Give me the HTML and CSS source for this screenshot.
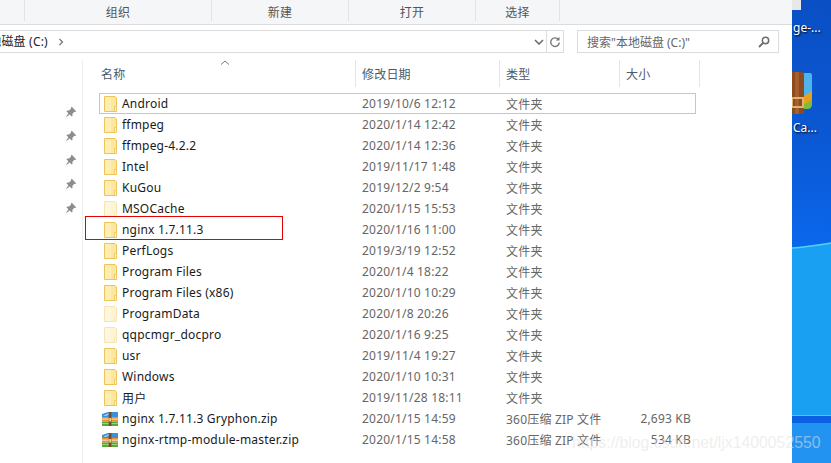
FILE: index.html
```html
<!DOCTYPE html>
<html lang="zh">
<head>
<meta charset="utf-8">
<title>本地磁盘 (C:)</title>
<link rel="stylesheet" href="styles.css">
</head>
<body>
<svg class="defs" width="0" height="0" aria-hidden="true">
  <symbol id="folder" viewBox="0 0 13 16">
    <path d="M.5.5h10.500l1.500 1.500v13.500H.5z" fill="#fde7a0" stroke="#ecc45a"/>
    <path d="M1 1h6v14H1z" fill="#ffeeb4"/>
    <path d="M10.500 10.500h2v5h-2z" fill="#fff3c4" stroke="#ecc45a" stroke-width=".8"/>
  </symbol>
  <symbol id="pin" viewBox="0 0 12 12">
    <path d="M6.800.8l4.400 4.400-1 .9-.8-.3-2 2 .2 1.800-.9.900-2-2L1.300 11 1 10.700l2.400-3.400-2-2 .9-.9 1.800.2 2-2-.3-.8z" fill="#8a8d92"/>
  </symbol>
  <symbol id="zip" viewBox="0 0 16 14">
    <path d="M0 2l6-2h10v5H0z" fill="#3f8fd8"/>
    <path d="M1 4l6-3h2L4 4z" fill="#a9d8f5"/>
    <path d="M0 5h16v4.500H0z" fill="#e8933a"/>
    <path d="M0 6.600h16v1.200H0z" fill="#f9d9a6"/>
    <path d="M0 9.500h16V14H0z" fill="#5aa83c"/>
    <path d="M0 11h16v1H0z" fill="#9ad07a"/>
    <path d="M6.800 0h2.600v14H6.800z" fill="#7a4a26"/>
    <path d="M7.200 6h1.800v3.500H7.200z" fill="#f2d27a"/>
  </symbol>
</svg>

<div class="screen">
  <main class="window">
    <nav class="toolbar">
      <span class="tool tool-a">组织</span>
      <span class="tool tool-b">新建</span>
      <span class="tool tool-c">打开</span>
      <span class="tool tool-d">选择</span>
    </nav>

    <div class="address-row">
      <div class="address">
        <span class="crumb">本地磁盘 (C:)</span>
        <svg class="crumb-arrow" viewBox="0 0 6 8" width="6" height="8"><path d="M1.500 1l3 3-3 3" fill="none" stroke="#777" stroke-width="1.300"/></svg>
        <svg class="drop" viewBox="0 0 10 6" width="10" height="6"><path d="M1 1l4 4 4-4" fill="none" stroke="#666" stroke-width="1.500"/></svg>
        <span class="refresh">
          <svg viewBox="0 0 12 12" width="12" height="12"><path d="M9.700 4A4.300 4.300 0 1 0 10.300 6.500" fill="none" stroke="#777" stroke-width="1.400"/><path d="M10.500 .8v3.700H6.800z" fill="#777"/></svg>
        </span>
      </div>
      <div class="search">
        <span>搜索"本地磁盘 (C:)"</span>
        <svg viewBox="0 0 12 12" width="12" height="12"><circle cx="7.500" cy="4.500" r="3.200" fill="none" stroke="#6d6d6d" stroke-width="1.500"/><path d="M5 7l-4 4" stroke="#6d6d6d" stroke-width="1.800"/></svg>
      </div>
    </div>

    <div class="body">
      <aside class="pins">
        <svg class="pin"><use href="#pin"/></svg>
        <svg class="pin"><use href="#pin"/></svg>
        <svg class="pin"><use href="#pin"/></svg>
        <svg class="pin"><use href="#pin"/></svg>
        <svg class="pin"><use href="#pin"/></svg>
      </aside>
      <section class="list">
        <svg class="sort" viewBox="0 0 10 5" width="10" height="5"><path d="M1 4.500l4-3.500 4 3.500" fill="none" stroke="#777"/></svg>
        <header class="head">
          <span class="h-name">名称</span>
          <span class="h-date">修改日期</span>
          <span class="h-type">类型</span>
          <span class="h-size">大小</span>
        </header>
        <div class="rows">
          <div class="row selected"><svg class="ico"><use href="#folder"/></svg><span class="name">Android</span><span class="date">2019/10/6 12:12</span><span class="type">文件夹</span><span class="size"></span></div>
          <div class="row"><svg class="ico"><use href="#folder"/></svg><span class="name">ffmpeg</span><span class="date">2020/1/14 12:42</span><span class="type">文件夹</span><span class="size"></span></div>
          <div class="row"><svg class="ico"><use href="#folder"/></svg><span class="name">ffmpeg-4.2.2</span><span class="date">2020/1/14 12:36</span><span class="type">文件夹</span><span class="size"></span></div>
          <div class="row"><svg class="ico"><use href="#folder"/></svg><span class="name">Intel</span><span class="date">2019/11/17 1:48</span><span class="type">文件夹</span><span class="size"></span></div>
          <div class="row"><svg class="ico"><use href="#folder"/></svg><span class="name">KuGou</span><span class="date">2019/12/2 9:54</span><span class="type">文件夹</span><span class="size"></span></div>
          <div class="row"><svg class="ico faded"><use href="#folder"/></svg><span class="name">MSOCache</span><span class="date">2020/1/15 15:53</span><span class="type">文件夹</span><span class="size"></span></div>
          <div class="row marked"><svg class="ico"><use href="#folder"/></svg><span class="name">nginx 1.7.11.3</span><span class="date">2020/1/16 11:00</span><span class="type">文件夹</span><span class="size"></span></div>
          <div class="row"><svg class="ico"><use href="#folder"/></svg><span class="name">PerfLogs</span><span class="date">2019/3/19 12:52</span><span class="type">文件夹</span><span class="size"></span></div>
          <div class="row"><svg class="ico"><use href="#folder"/></svg><span class="name">Program Files</span><span class="date">2020/1/4 18:22</span><span class="type">文件夹</span><span class="size"></span></div>
          <div class="row"><svg class="ico"><use href="#folder"/></svg><span class="name">Program Files (x86)</span><span class="date">2020/1/10 10:29</span><span class="type">文件夹</span><span class="size"></span></div>
          <div class="row"><svg class="ico faded"><use href="#folder"/></svg><span class="name">ProgramData</span><span class="date">2020/1/8 20:26</span><span class="type">文件夹</span><span class="size"></span></div>
          <div class="row"><svg class="ico faded"><use href="#folder"/></svg><span class="name">qqpcmgr_docpro</span><span class="date">2020/1/16 9:25</span><span class="type">文件夹</span><span class="size"></span></div>
          <div class="row"><svg class="ico"><use href="#folder"/></svg><span class="name">usr</span><span class="date">2019/11/4 19:27</span><span class="type">文件夹</span><span class="size"></span></div>
          <div class="row"><svg class="ico"><use href="#folder"/></svg><span class="name">Windows</span><span class="date">2020/1/10 10:31</span><span class="type">文件夹</span><span class="size"></span></div>
          <div class="row"><svg class="ico"><use href="#folder"/></svg><span class="name">用户</span><span class="date">2019/11/28 18:11</span><span class="type">文件夹</span><span class="size"></span></div>
          <div class="row"><svg class="ico zip"><use href="#zip"/></svg><span class="name">nginx 1.7.11.3 Gryphon.zip</span><span class="date">2020/1/15 14:59</span><span class="type">360压缩 ZIP 文件</span><span class="size">2,693 KB</span></div>
          <div class="row"><svg class="ico zip"><use href="#zip"/></svg><span class="name">nginx-rtmp-module-master.zip</span><span class="date">2020/1/15 14:58</span><span class="type">360压缩 ZIP 文件</span><span class="size">534 KB</span></div>
        </div>
      </section>
    </div>
  </main>

  <aside class="desktop">
    <svg class="wave" viewBox="0 0 39 463" width="39" height="463">
      <path d="M0 248C14 247 26 245 39 243V415H0z" fill="#19a0f2"/>
      <path d="M0 248C14 247 26 245 39 243" fill="none" stroke="#4fd4f5" stroke-width="1.500"/>
      <path d="M0 415h39v1H0z" fill="#5cbcf5"/>
      <path d="M0 416h39v7H0z" fill="#0a62e2"/>
      <path d="M0 423h39v40H0z" fill="#2393f2"/>
    </svg>
    <span class="note"></span>
    <span class="label label-top">ge-...</span>
    <svg class="bag" viewBox="0 0 20 42" width="20" height="42">
      <path d="M9 1h9a2 2 0 0 1 2 2v25l-9 9H9z" fill="#4fb4ec"/>
      <path d="M9 26l11-7v10l-11 5z" fill="#e9a11c"/>
      <path d="M9 34l11-6v4c0 4-2 5-5 5H9z" fill="#7cbb3c"/>
      <path d="M0 0h9c2 0 3 1 3 3v39H0z" fill="#8c4a20"/>
      <path d="M3 0h4v42H3z" fill="#a65f2a"/>
      <path d="M0 26h11v9H0z" fill="none" stroke="#d9b66a" stroke-width="2"/>
    </svg>
    <span class="label label-bag">Ca...</span>
  </aside>
</div>
<span class="watermark">https://blog.csdn.net/ljx1400052550</span>
</body>
</html>
```
FILE: styles.css
```css
* { box-sizing: border-box; }
html, body { margin: 0; height: 100%; overflow: hidden; }
body {
  position: relative;
  font-family: "Noto Sans", "Noto Sans CJK SC", sans-serif;
  font-size: 12px;
  letter-spacing: .2px;
  color: #1a1a1a;
}
.defs { position: absolute; }
.screen { display: flex; width: 831px; height: 463px; }

.window { width: 792px; height: 463px; background: #fff; display: flex; flex-direction: column; flex: none; }

.toolbar {
  height: 25px;
  background: #f5f6f7;
  border-bottom: 1px solid #dcdcdc;
  display: flex;
  padding-left: 24px;
  flex: none;
}
.tool {
  height: 21px;
  padding-top: 3px;
  display: flex;
  align-items: center;
  justify-content: center;
  color: #555;
  border-left: 1px solid #e2e3e4;
}
.tool-a { width: 187px; }
.tool-b { width: 137px; }
.tool-c { width: 127px; }
.tool-d { width: 85px; border-right: 1px solid #e2e3e4; }

.address-row { display: flex; padding: 5px 13px 0 0; height: 28px; flex: none; }
.address {
  width: 565px;
  height: 23px;
  margin-left: -1px;
  border: 1px solid #dcdcdc;
  border-left: 0;
  display: flex;
  align-items: center;
  color: #222;
  position: relative;
}
.crumb { margin-left: -22px; padding-bottom: 1px; white-space: nowrap; }
.crumb-arrow { margin-left: 10px; }
.drop { position: absolute; left: 535px; top: 8px; }
.refresh {
  position: absolute;
  left: 547px;
  top: 0;
  bottom: 0;
  width: 17px;
  border-left: 1px solid #dcdcdc;
  display: flex;
  align-items: center;
  justify-content: center;
}
.search {
  width: 202px;
  height: 23px;
  margin-left: 13px;
  border: 1px solid #dcdcdc;
  display: flex;
  align-items: center;
  justify-content: space-between;
  padding: 0 8px 0 9px;
  color: #666;
}
.search span { letter-spacing: 0; }

.body { display: flex; flex: 1; min-height: 0; padding-top: 7px; }
.pins {
  width: 83px;
  flex: none;
  border-right: 1px solid #eeeeee;
  display: flex;
  flex-direction: column;
  align-items: flex-end;
  gap: 12px;
  padding: 46px 5px 0 0;
}
.pin { width: 12px; height: 12px; }

.list { position: relative; flex: 1; }
.sort { position: absolute; left: 137px; top: 0; }
.head {
  height: 27px;
  display: flex;
  align-items: center;
  color: #4c5a6b;
  margin-bottom: 6px;
}
.head span { height: 27px; display: flex; align-items: center; border-right: 1px solid #e5e5e5; padding-left: 6px; }
.head .h-name { width: 273px; padding-left: 18px; }
.head .h-date { width: 144px; }
.head .h-type { width: 120px; }
.head .h-size { width: 80px; }

.rows { display: flex; flex-direction: column; padding-left: 16px; }
.row {
  height: 21px;
  width: 597px;
  display: flex;
  align-items: center;
  border: 1px solid transparent;
  position: relative;
  white-space: nowrap;
}
.row.selected::before {
  content: "";
  box-sizing: border-box;
  position: absolute;
  left: -1px;
  top: -1px;
  width: 597px;
  height: 21px;
  border: 1px solid #99d1ff;
}
.row.marked::before {
  content: "";
  box-sizing: border-box;
  position: absolute;
  left: -15px;
  top: -4px;
  width: 198px;
  height: 24px;
  border: 1px solid #e60000;
}
.ico { width: 13px; height: 16px; margin-left: 4px; flex: none; }
.ico.faded { opacity: .45; }
.ico.zip { width: 16px; height: 14px; margin-left: 2px; }
.name { width: 240px; margin-left: 5px; flex: none; color: #1a1a1a; }
.ico.zip + .name { margin-left: 4px; width: 240px; }
.date { width: 144px; color: #666; flex: none; }
.type { width: 115px; color: #666; flex: none; }
.size { width: 70px; text-align: right; color: #666; flex: none; }

.desktop {
  flex: 1;
  position: relative;
  background: linear-gradient(180deg, #0a4fc4 0%, #0b58d4 30%, #0a66ea 52%);
  color: #fff;
  overflow: hidden;
}
.wave { position: absolute; left: 0; top: 0; }
.note { position: absolute; left: 0; top: 0; width: 9px; height: 10px; background: #e8e8e8; }
.label { position: absolute; left: 1px; font-size: 12px; letter-spacing: 0; text-shadow: 1px 1px 2px #000; white-space: nowrap; }
.label-top { top: 19px; }
.label-bag { top: 119px; }
.bag { position: absolute; left: 0; top: 72px; }

.watermark {
  position: absolute;
  left: 572px;
  top: 434px;
  font-family: "Liberation Sans", sans-serif;
  font-size: 15.8px;
  letter-spacing: 0;
  color: rgba(225, 225, 225, .55);
  white-space: nowrap;
}
```
